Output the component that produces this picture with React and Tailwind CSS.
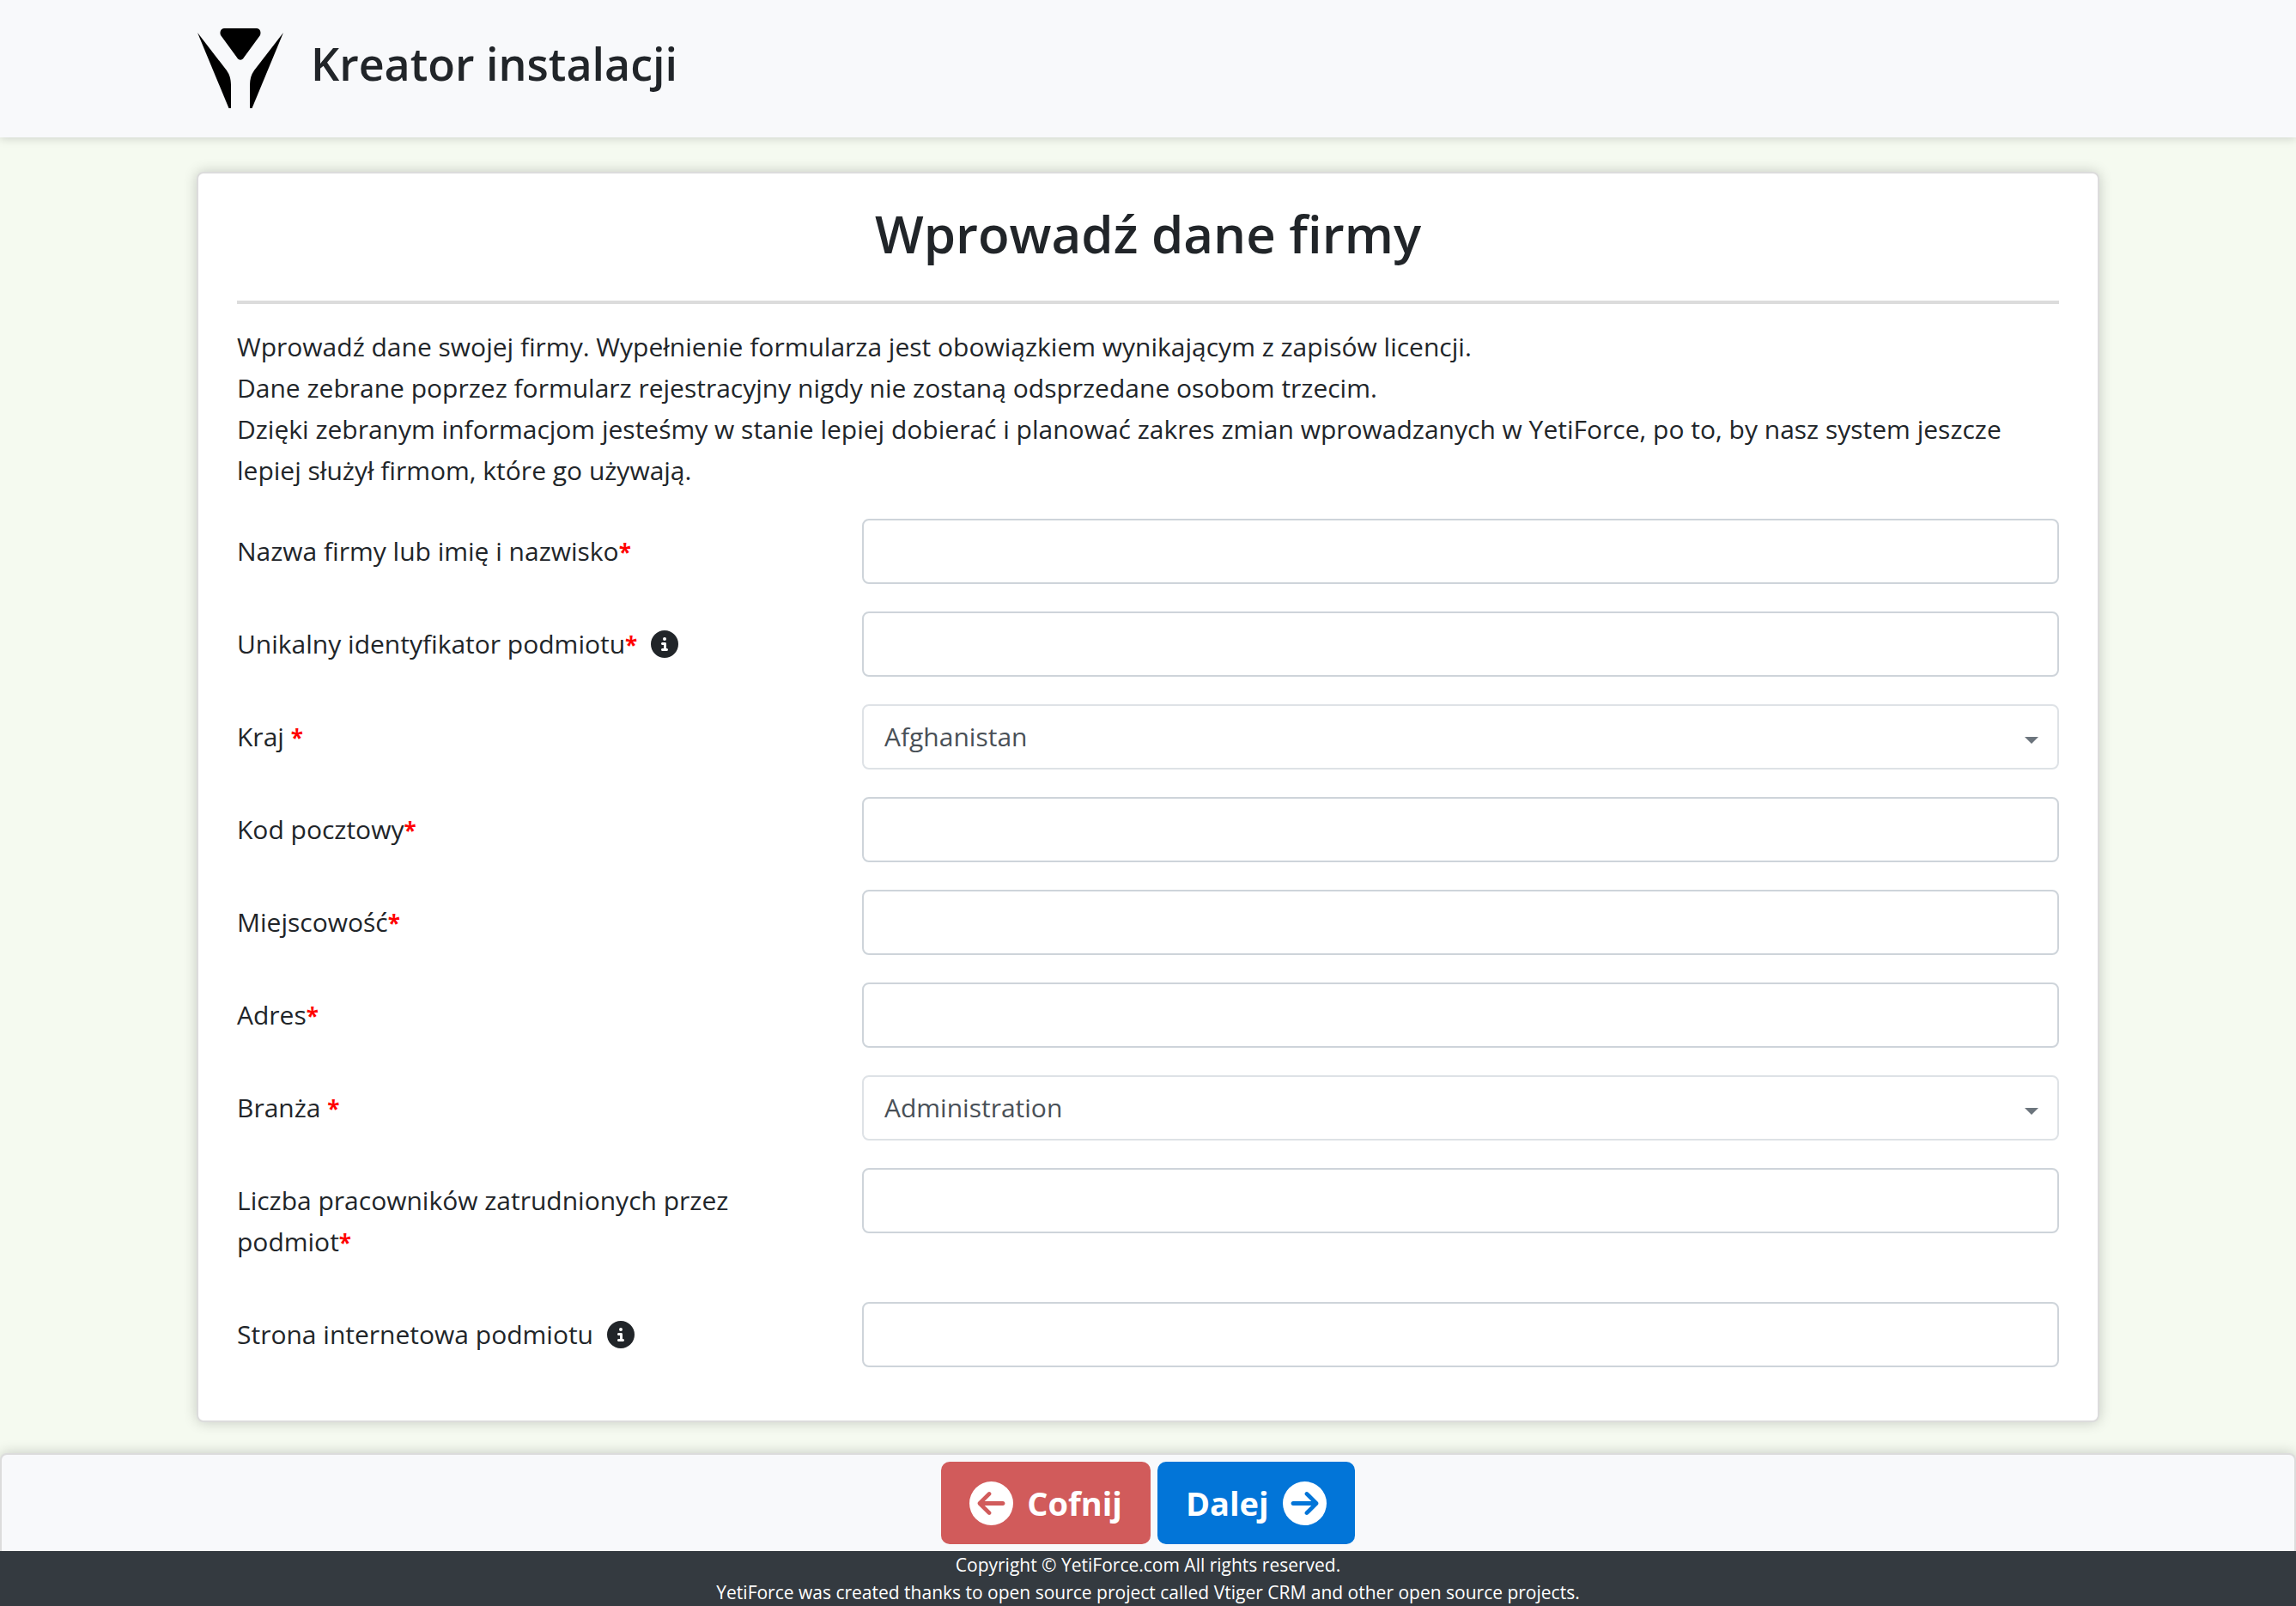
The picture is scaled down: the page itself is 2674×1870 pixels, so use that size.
import { FaCircleInfo, FaCircleArrowLeft, FaCircleArrowRight } from "react-icons/fa6";

const fields = [
  { id: "name", label: "Nazwa firmy lub imię i nazwisko", required: true },
  { id: "vat", label: "Unikalny identyfikator podmiotu", required: true, info: true },
  { id: "country", label: "Kraj ", required: true, options: ["Afghanistan"] },
  { id: "postcode", label: "Kod pocztowy", required: true },
  { id: "city", label: "Miejscowość", required: true },
  { id: "address", label: "Adres", required: true },
  { id: "industry", label: "Branża ", required: true, options: ["Administration"] },
  { id: "employees", label: "Liczba pracowników zatrudnionych przez ", lastWord: "podmiot", required: true },
  { id: "website", label: "Strona internetowa podmiotu", info: true },
];

function Logo() {
  return (
    <svg viewBox="0 0 100 94" className="h-[94px] w-[100px]" aria-hidden="true">
      <path d="M31 0H69C72.500 0 74.500 4 73 8L54 34C52 37.600 48 37.600 46 34L27 8C25.500 4 27.500 0 31 0Z" />
      <path d="M0 5L34 49Q39 56 39 66V93H36.500Z" />
      <path d="M100 5L66 49Q61 56 61 66V93H63.500Z" />
    </svg>
  );
}

function Field({ field }) {
  return (
    <div className="grid grid-cols-12 items-start gap-x-[62px]">
      <div className="col-span-4 flex items-start py-3.5">
        <label htmlFor={field.id} className="whitespace-pre-wrap">
          {field.label}
          <span className="whitespace-nowrap">
            {field.lastWord}
            {field.required && <span className="text-[26px] leading-8 font-bold text-[#ff0000]">*</span>}
          </span>
        </label>
        {field.info && (
          <button type="button" aria-label="Informacja" className="ml-4 flex h-12 shrink-0 items-center">
            <FaCircleInfo className="size-8" />
          </button>
        )}
      </div>
      {field.options ? (
        <div className="relative col-span-8">
          <select
            id={field.id}
            className="h-[76px] w-full appearance-none rounded-lg border-2 border-[#dee2e6] bg-white px-6 text-[#495057]"
          >
            {field.options.map((o) => (
              <option key={o}>{o}</option>
            ))}
          </select>
          <svg
            viewBox="0 0 16 8"
            className="pointer-events-none absolute top-[38px] right-6 h-2 w-4 fill-[#6c757d]"
            aria-hidden="true"
          >
            <path d="M0 0H16L8 8Z" />
          </svg>
        </div>
      ) : (
        <input
          id={field.id}
          type="text"
          className="col-span-8 h-[76px] w-full rounded-lg border-2 border-[#ced4da] bg-white px-6 text-[#495057]"
        />
      )}
    </div>
  );
}

export default function App() {
  return (
    <div className="flex min-h-screen flex-col bg-[#f5faf0] font-['Segoe_UI','Open_Sans',sans-serif] text-[30px] leading-[48px] text-[#212529]">
      <header className="bg-[#f8f9fb] shadow-[0_2px_10px_rgba(0,0,0,0.15)]">
        <div className="mx-auto flex h-40 max-w-[2214px] items-center gap-8">
          <Logo />
          <h1 className="pb-3 text-[52px] leading-[64px] font-semibold">Kreator instalacji</h1>
        </div>
      </header>

      <main className="mx-auto mt-10 w-full max-w-[2216px] rounded-lg border-2 border-[#dcdcdc] bg-white px-[45px] pb-[62px] shadow-[0_0_16px_rgba(0,0,0,0.2)]">
        <h2 className="pt-7 pb-9 text-center text-[60px] leading-[84px] font-semibold">Wprowadź dane firmy</h2>
        <hr className="border-t-4 border-[#dcdcdc]" />
        <p className="mt-[26px]">
          Wprowadź dane swojej firmy. Wypełnienie formularza jest obowiązkiem wynikającym z zapisów licencji.
          <br />
          Dane zebrane poprzez formularz rejestracyjny nigdy nie zostaną odsprzedane osobom trzecim.
          <br />
          Dzięki zebranym informacjom jesteśmy w stanie lepiej dobierać i planować zakres zmian wprowadzanych w
          YetiForce, po to, by nasz system jeszcze lepiej służył firmom, które go używają.
        </p>
        <form className="mt-8 flex flex-col gap-8">
          {fields.map((f) => (
            <Field key={f.id} field={f} />
          ))}
        </form>
      </main>

      <div className="mt-9 flex justify-center gap-2 rounded-t-lg border-2 border-b-0 border-[#dcdcdc] bg-[#f8f9fb] py-2 text-[38px] font-bold text-white shadow-[0_0_16px_rgba(0,0,0,0.2)]">
        <button type="button" className="flex h-24 items-center gap-4 rounded-[10px] bg-[#d15b5b] px-[33px]">
          <FaCircleArrowLeft className="size-[51px]" />
          Cofnij
        </button>
        <button type="button" className="flex h-24 items-center gap-4 rounded-[10px] bg-[#0275d8] px-[33px]">
          Dalej
          <FaCircleArrowRight className="size-[51px]" />
        </button>
      </div>
      <footer className="relative grow bg-[#343a40] text-center text-[21px] leading-8 text-white">
        <p>Copyright © YetiForce.com All rights reserved.</p>
        <p>YetiForce was created thanks to open source project called Vtiger CRM and other open source projects.</p>
      </footer>
    </div>
  );
}
